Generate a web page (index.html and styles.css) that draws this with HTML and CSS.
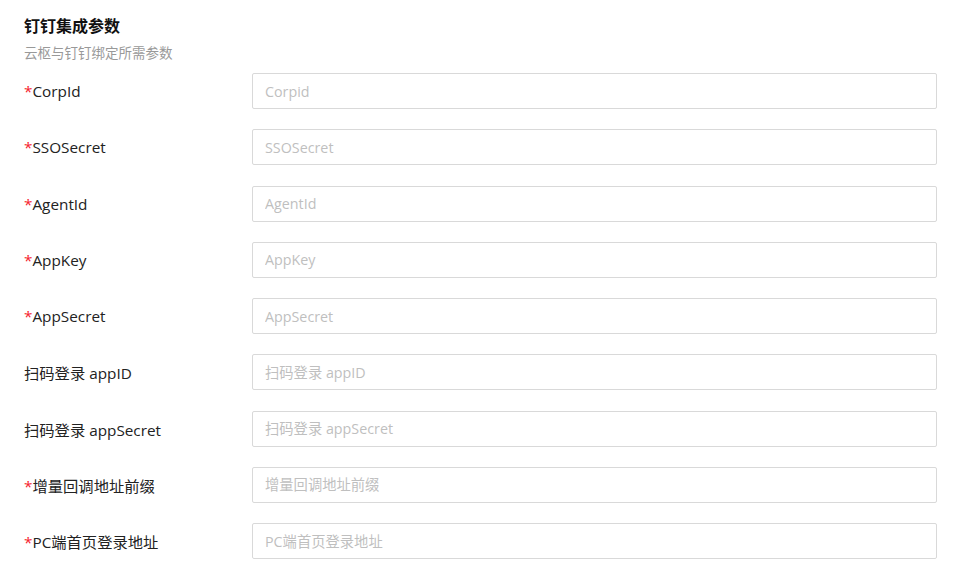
FILE: index.html
```html
<!DOCTYPE html>
<html lang="zh">
<head>
<meta charset="utf-8">
<link rel="stylesheet" href="styles.css">
</head>
<body>
<div class="page">
  <div class="title">钉钉集成参数</div>
  <div class="subtitle">云枢与钉钉绑定所需参数</div>
  <form class="form">
    <div class="row"><label class="label"><span class="req">*</span>CorpId</label><input class="input" placeholder="Corpid"></div>
    <div class="row"><label class="label"><span class="req">*</span>SSOSecret</label><input class="input" placeholder="SSOSecret"></div>
    <div class="row"><label class="label"><span class="req">*</span>AgentId</label><input class="input" placeholder="AgentId"></div>
    <div class="row"><label class="label"><span class="req">*</span>AppKey</label><input class="input" placeholder="AppKey"></div>
    <div class="row"><label class="label"><span class="req">*</span>AppSecret</label><input class="input" placeholder="AppSecret"></div>
    <div class="row"><label class="label">扫码登录 appID</label><input class="input" placeholder="扫码登录 appID"></div>
    <div class="row"><label class="label">扫码登录 appSecret</label><input class="input" placeholder="扫码登录 appSecret"></div>
    <div class="row"><label class="label"><span class="req">*</span>增量回调地址前缀</label><input class="input" placeholder="增量回调地址前缀"></div>
    <div class="row"><label class="label"><span class="req">*</span>PC端首页登录地址</label><input class="input" placeholder="PC端首页登录地址"></div>
  </form>
</div>
</body>
</html>
```
FILE: styles.css
```css
html, body {
  margin: 0;
  padding: 0;
  background: #fff;
}
body {
  font-family: "Open Sans", "Noto Sans CJK SC", sans-serif;
  color: #333;
}
.page {
  padding: 14px 26px 0 24px;
}
.title {
  font-size: 16px;
  font-weight: bold;
  line-height: 24px;
  color: #111;
}
.subtitle {
  margin-top: 5px;
  font-size: 13.5px;
  line-height: 20px;
  color: #999;
}
.form {
  margin-top: 10px;
  display: flex;
  flex-direction: column;
  gap: 20.25px;
}
.row {
  display: flex;
  align-items: center;
  height: 36px;
}
.label {
  width: 228px;
  flex: none;
  font-size: 15.3px;
  color: #222;
}
.req {
  color: #f5222d;
}
.input {
  flex: 1;
  height: 36px;
  box-sizing: border-box;
  border: 1px solid #d9d9d9;
  border-radius: 2px;
  padding: 0 12px;
  font-family: inherit;
  font-size: 14.3px;
  color: #333;
  outline: none;
  margin: 0;
}
.input::placeholder {
  color: #bfbfbf;
}
```
